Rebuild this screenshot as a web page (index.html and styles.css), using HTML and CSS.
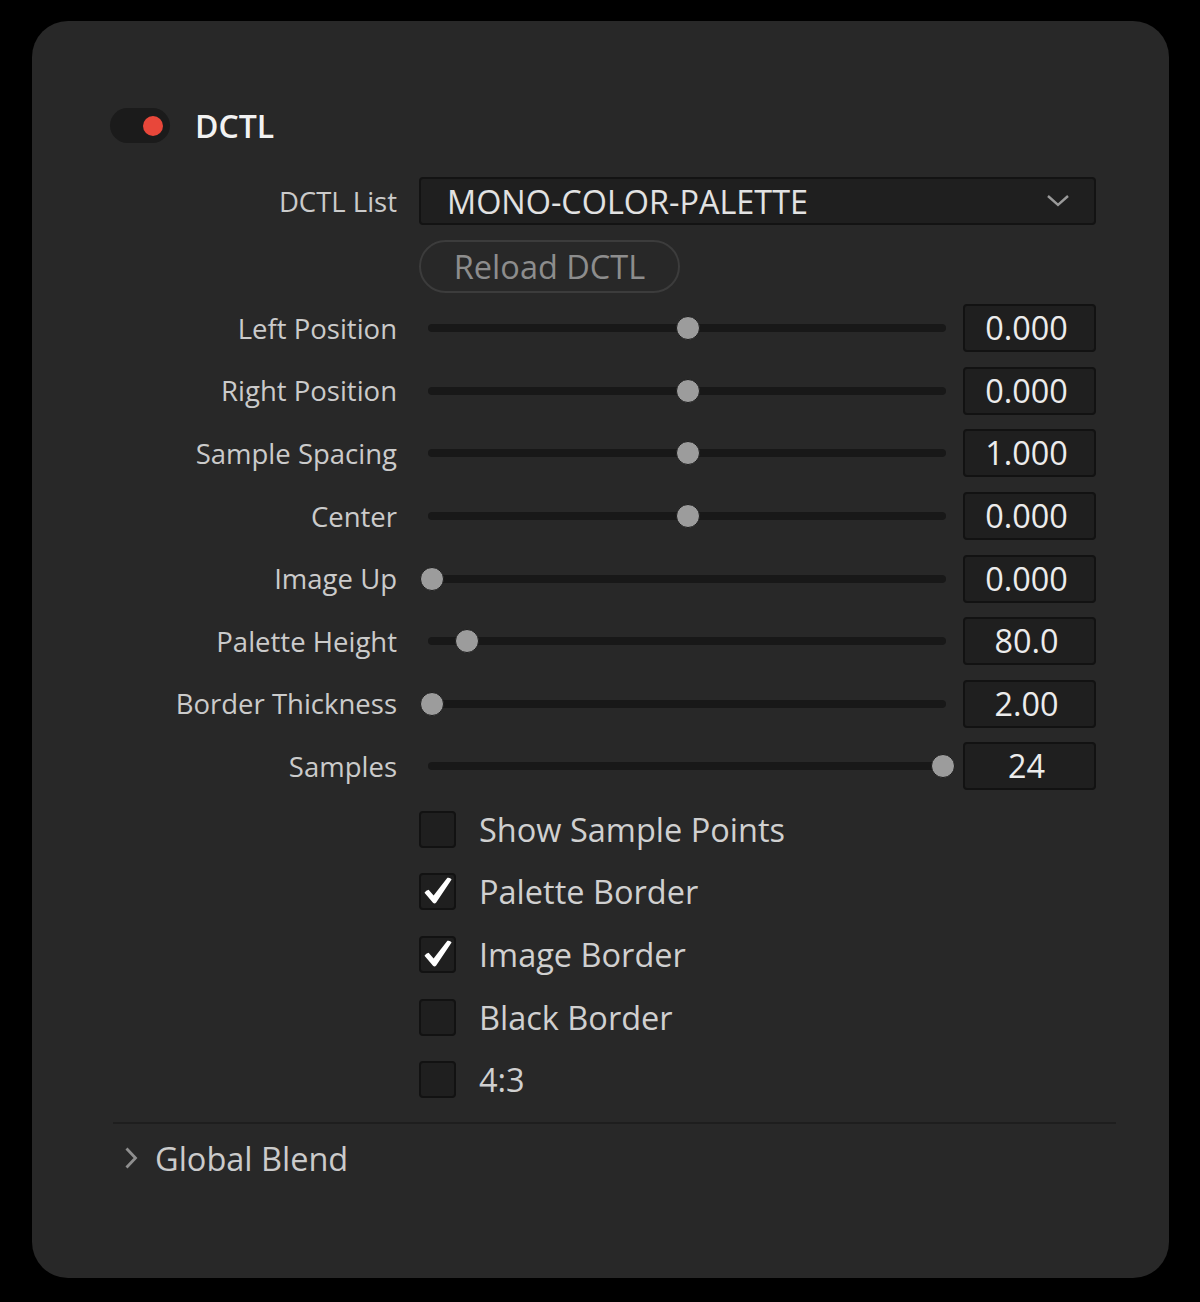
FILE: index.html
```html
<!DOCTYPE html>
<html>
<head>
<meta charset="utf-8">
<link rel="stylesheet" href="styles.css">
</head>
<body>
<div class="panel">
  <div class="header">
    <div class="toggle"><span class="dot"></span></div>
    <div class="title">DCTL</div>
  </div>

  <div class="row row-dd">
    <div class="label">DCTL List</div>
    <div class="dropdown">
      <span class="dd-text">MONO-COLOR-PALETTE</span>
      <svg class="chev" width="24" height="14" viewBox="0 0 24 14"><path d="M2 2 L12 11 L22 2" fill="none" stroke="#9a9a9a" stroke-width="2.4"/></svg>
    </div>
  </div>

  <div class="row row-btn">
    <div class="label"></div>
    <div><div class="btn">Reload DCTL</div></div>
  </div>

  <div class="row row-s">
    <div class="label">Left Position</div>
    <div class="ctl"><div class="slider"><div class="track"></div><div class="thumb" style="--v:0.5"></div></div><div class="val">0.000</div></div>
  </div>
  <div class="row row-s">
    <div class="label">Right Position</div>
    <div class="ctl"><div class="slider"><div class="track"></div><div class="thumb" style="--v:0.5"></div></div><div class="val">0.000</div></div>
  </div>
  <div class="row row-s">
    <div class="label">Sample Spacing</div>
    <div class="ctl"><div class="slider"><div class="track"></div><div class="thumb" style="--v:0.5"></div></div><div class="val">1.000</div></div>
  </div>
  <div class="row row-s">
    <div class="label">Center</div>
    <div class="ctl"><div class="slider"><div class="track"></div><div class="thumb" style="--v:0.5"></div></div><div class="val">0.000</div></div>
  </div>
  <div class="row row-s">
    <div class="label">Image Up</div>
    <div class="ctl"><div class="slider"><div class="track"></div><div class="thumb" style="--v:0"></div></div><div class="val">0.000</div></div>
  </div>
  <div class="row row-s">
    <div class="label">Palette Height</div>
    <div class="ctl"><div class="slider"><div class="track"></div><div class="thumb" style="--v:0.0685"></div></div><div class="val">80.0</div></div>
  </div>
  <div class="row row-s">
    <div class="label">Border Thickness</div>
    <div class="ctl"><div class="slider"><div class="track"></div><div class="thumb" style="--v:0"></div></div><div class="val">2.00</div></div>
  </div>
  <div class="row row-s">
    <div class="label">Samples</div>
    <div class="ctl"><div class="slider"><div class="track"></div><div class="thumb" style="--v:1"></div></div><div class="val">24</div></div>
  </div>

  <div class="row row-c">
    <div class="label"></div>
    <div class="check"><span class="box"></span><span class="ctext">Show Sample Points</span></div>
  </div>
  <div class="row row-c">
    <div class="label"></div>
    <div class="check"><span class="box"><svg width="33" height="33" viewBox="0 0 33 33"><path d="M3.5 17.8 Q5 15.2 7.6 14.8 L12.6 20.6 L26.4 2.8 Q29.2 2.2 30.6 4.6 L15.2 27.6 Q13.6 29.4 12 27.8 Z" fill="#ffffff"/></svg></span><span class="ctext">Palette Border</span></div>
  </div>
  <div class="row row-c">
    <div class="label"></div>
    <div class="check"><span class="box"><svg width="33" height="33" viewBox="0 0 33 33"><path d="M3.5 17.8 Q5 15.2 7.6 14.8 L12.6 20.6 L26.4 2.8 Q29.2 2.2 30.6 4.6 L15.2 27.6 Q13.6 29.4 12 27.8 Z" fill="#ffffff"/></svg></span><span class="ctext">Image Border</span></div>
  </div>
  <div class="row row-c">
    <div class="label"></div>
    <div class="check"><span class="box"></span><span class="ctext">Black Border</span></div>
  </div>
  <div class="row row-c">
    <div class="label"></div>
    <div class="check"><span class="box"></span><span class="ctext">4:3</span></div>
  </div>

  <div class="sep"></div>

  <div class="section">
    <svg class="sec-chev" width="14" height="24" viewBox="0 0 14 24"><path d="M2.5 2.5 L11.5 12 L2.5 21.5" fill="none" stroke="#8f8f8f" stroke-width="2.8"/></svg>
    <span class="sec-text">Global Blend</span>
  </div>
</div>
</body>
</html>
```

FILE: styles.css
```css
html, body {
  margin: 0;
  padding: 0;
  background: #000;
}
body {
  font-family: "Open Sans", "Liberation Sans", sans-serif;
  padding-top: 21px;
  padding-left: 32px;
}
.panel {
  width: 1137px;
  height: 1257px;
  box-sizing: border-box;
  background: #282828;
  border-radius: 36px;
  padding-top: 87px;
}
.header {
  display: flex;
  align-items: center;
  padding-left: 78px;
  height: 35px;
  margin-bottom: 34px;
}
.toggle {
  width: 60px;
  height: 35px;
  border-radius: 18px;
  background: #1b1b1b;
  position: relative;
}
.dot {
  position: absolute;
  width: 20px;
  height: 20px;
  border-radius: 50%;
  background: #e8473a;
  left: 33px;
  top: 8px;
}
.title {
  margin-left: 25px;
  font-size: 32px;
  font-weight: 600;
  color: #f2f2f2;
}
.row {
  display: grid;
  grid-template-columns: 365px 677px;
  column-gap: 22px;
  align-items: center;
}
.label {
  text-align: right;
  font-size: 27.5px;
  color: #cbcbcb;
  white-space: nowrap;
}
.row-dd {
  height: 48px;
  margin-bottom: 15px;
}
.dropdown {
  height: 48px;
  box-sizing: border-box;
  background: #1f1f1f;
  border: 2px solid #131313;
  border-radius: 4px;
  display: flex;
  align-items: center;
  justify-content: space-between;
  padding-left: 26px;
  padding-right: 24px;
}
.dd-text {
  font-size: 32.4px;
  color: #e2e2e2;
}
.chev {
  display: block;
}
.row-btn {
  height: 53px;
  margin-bottom: 4px;
}
.btn {
  width: 261px;
  height: 53px;
  box-sizing: border-box;
  border: 2px solid #3c3c3c;
  border-radius: 27px;
  display: flex;
  align-items: center;
  justify-content: center;
  font-size: 32.5px;
  color: #8d8d8d;
}
.row-s {
  height: 62.6px;
}
.ctl {
  display: flex;
  align-items: center;
  gap: 16px;
}
.slider {
  position: relative;
  width: 528px;
  height: 26px;
}
.track {
  position: absolute;
  left: 9px;
  right: 1px;
  top: 9px;
  height: 8px;
  border-radius: 4px;
  background: #181818;
}
.thumb {
  position: absolute;
  top: 1px;
  left: calc(1px + var(--v) * 511px);
  width: 24px;
  height: 24px;
  box-sizing: border-box;
  border-radius: 50%;
  background: #9c9c9c;
  border: 1.5px solid #1c1c1c;
}
.val {
  width: 133px;
  height: 48px;
  box-sizing: border-box;
  background: #1f1f1f;
  border: 2px solid #121212;
  border-radius: 4px;
  display: flex;
  align-items: center;
  justify-content: center;
  padding-right: 6px;
  padding-bottom: 2px;
  font-size: 32.4px;
  color: #ececec;
}
.row-c {
  height: 62.7px;
}
.check {
  display: flex;
  align-items: center;
}
.box {
  width: 37px;
  height: 37px;
  box-sizing: border-box;
  background: #1f1f1f;
  border: 2px solid #121212;
  border-radius: 4px;
  display: flex;
  align-items: center;
  justify-content: center;
}
.box svg {
  display: block;
}
.ctext {
  margin-left: 23px;
  font-size: 32.5px;
  color: #d0d0d0;
}
.sep {
  margin-top: 11px;
  margin-left: 81px;
  width: 1003px;
  height: 2px;
  background: #1e1e1e;
}
.section {
  display: flex;
  align-items: center;
  height: 68px;
  padding-left: 92px;
}
.sec-chev {
  display: block;
}
.sec-text {
  margin-left: 17px;
  font-size: 32.5px;
  color: #cbcbcb;
}
```
